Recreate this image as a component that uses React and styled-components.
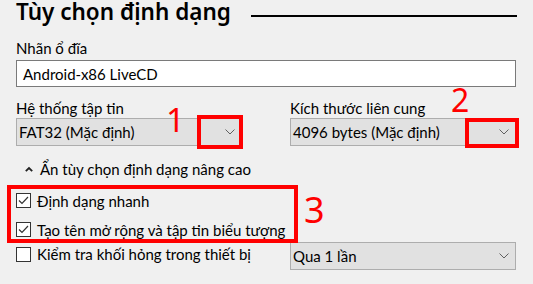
import React from "react";
import styled, { createGlobalStyle } from "styled-components";

const GlobalStyle = createGlobalStyle`
  html, body {
    margin: 0;
    padding: 0;
    background: #f0f0f0;
  }
  body {
    font-family: Lato, "Noto Sans", sans-serif;
    color: #000;
  }
`;

const Page = styled.div`
  position: relative;
  width: 533px;
  height: 284px;
  box-sizing: border-box;
  padding: 1px 17px 0 16px;
  overflow: hidden;
`;

const TitleRow = styled.div`
  display: flex;
  align-items: flex-start;
`;

const Title = styled.h1`
  margin: 0;
  font-family: "Noto Sans", sans-serif;
  font-size: 22.5px;
  line-height: 22px;
  font-weight: 600;
  white-space: nowrap;
`;

const TitleLine = styled.div`
  flex: 1;
  height: 2px;
  margin: 14px -1px 0 20px;
  background: #000;
`;

const Label = styled.div`
  font-size: 15px;
  line-height: 20px;
  margin-top: ${(p) => p.$top || 0}px;
  white-space: nowrap;
`;

const TextBox = styled.div`
  margin-top: 2px;
  height: 27px;
  box-sizing: border-box;
  border: 1px solid #7a7a7a;
  background: #fff;
  padding-left: 6px;
  font-size: 15px;
  display: flex;
  align-items: center;
`;

const Columns = styled.div`
  display: grid;
  grid-template-columns: 226px 1fr;
  column-gap: 48px;
  margin-top: 11px;
`;

const Combo = styled.div`
  height: 28px;
  box-sizing: border-box;
  border: 1px solid #adadad;
  background: #e1e1e1;
  padding: 0 6px 0 2px;
  font-size: 15px;
  display: flex;
  align-items: center;
  justify-content: space-between;
  white-space: nowrap;
`;

const Chevron = () => (
  <svg width="10" height="6" viewBox="0 0 10 6">
    <path d="M0.5 0.5 L5 5 L9.5 0.5" fill="none" stroke="#606060" strokeWidth="1" />
  </svg>
);

const Toggle = styled.div`
  margin-top: 13px;
  display: flex;
  align-items: center;
  gap: 7px;
  padding-left: 9px;
  font-size: 15px;
  line-height: 20px;
`;

const Checks = styled.div`
  margin-top: 7px;
`;

const CheckRow = styled.div`
  display: flex;
  align-items: center;
  gap: 6px;
  height: ${(p) => p.$h || 29}px;
  font-size: 15px;
  white-space: nowrap;
`;

const Box = styled.div`
  width: 15px;
  height: 15px;
  box-sizing: border-box;
  border: 1px solid #333;
  background: #fff;
  display: flex;
  align-items: center;
  justify-content: center;
`;

const LastRow = styled.div`
  display: grid;
  grid-template-columns: 274px 1fr;
  align-items: start;
  margin-top: -2px;
`;

const RedBox = styled.div`
  position: absolute;
  left: ${(p) => p.$x}px;
  top: ${(p) => p.$y}px;
  width: ${(p) => p.$w}px;
  height: ${(p) => p.$h}px;
  box-sizing: border-box;
  border: 4px solid #f00;
  pointer-events: none;
`;

const Num = styled.div`
  position: absolute;
  left: ${(p) => p.$x}px;
  top: ${(p) => p.$y}px;
  color: #f00;
  font-size: ${(p) => p.$size}px;
  line-height: 1;
  font-family: "Noto Sans", sans-serif;
`;

const Check = ({ on }) => (
  <Box>
    {on && (
      <svg width="11" height="9" viewBox="0 0 11 9">
        <path d="M1 4.5 L4 7.5 L10 1" fill="none" stroke="#333" strokeWidth="1.2" />
      </svg>
    )}
  </Box>
);

export default function App() {
  return (
    <>
      <GlobalStyle />
      <Page>
        <TitleRow>
          <Title>Tùy chọn định dạng</Title>
          <TitleLine />
        </TitleRow>

        <Label $top={15}>Nhãn ổ đĩa</Label>
        <TextBox>Android-x86 LiveCD</TextBox>

        <Columns>
          <div>
            <Label>Hệ thống tập tin</Label>
            <Combo>
              FAT32 (Mặc định)
              <Chevron />
            </Combo>
          </div>
          <div>
            <Label>Kích thước liên cung</Label>
            <Combo>
              4096 bytes (Mặc định)
              <Chevron />
            </Combo>
          </div>
        </Columns>

        <Toggle>
          <svg width="8" height="6" viewBox="0 0 8 6">
            <path d="M0.8 5.2 L4 2 L7.2 5.2" fill="none" stroke="#222" strokeWidth="1.8" />
          </svg>
          Ẩn tùy chọn định dạng nâng cao
        </Toggle>

        <Checks>
          <CheckRow>
            <Check on />
            Định dạng nhanh
          </CheckRow>
          <CheckRow>
            <Check on />
            Tạo tên mở rộng và tập tin biểu tượng
          </CheckRow>
          <LastRow>
            <CheckRow $h={24}>
              <Check />
              Kiểm tra khối hỏng trong thiết bị
            </CheckRow>
            <Combo>
              Qua 1 lần
              <Chevron />
            </Combo>
          </LastRow>
        </Checks>

        <RedBox $x={197} $y={115} $w={46} $h={34} />
        <RedBox $x={465} $y={118} $w={54} $h={30} />
        <RedBox $x={7} $y={185} $w={291} $h={58} />
        <Num $x={166} $y={103} $size={33}>1</Num>
        <Num $x={451} $y={84} $size={32}>2</Num>
        <Num $x={304} $y={192} $size={36}>3</Num>
      </Page>
    </>
  );
}
